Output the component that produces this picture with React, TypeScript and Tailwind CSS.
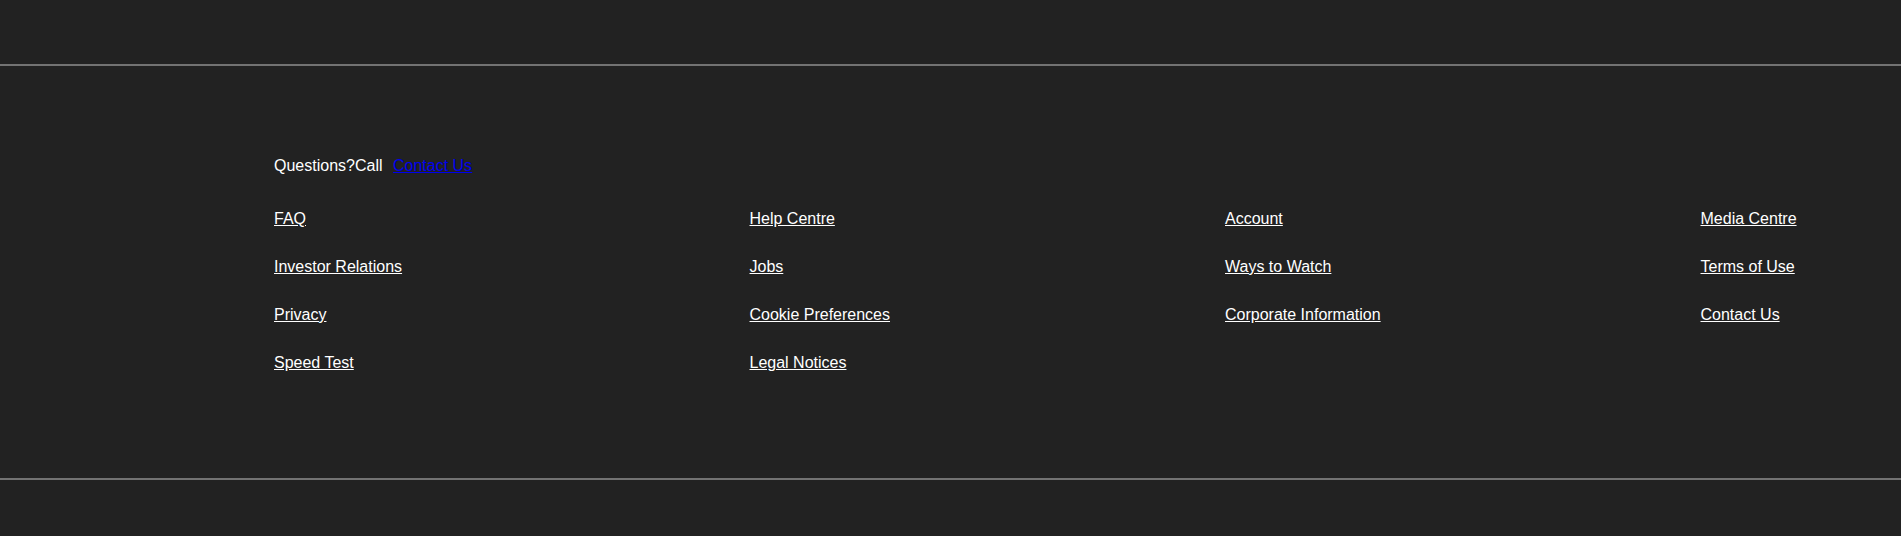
const columns = [
  ['FAQ', 'Investor Relations', 'Privacy', 'Speed Test'],
  ['Help Centre', 'Jobs', 'Cookie Preferences', 'Legal Notices'],
  ['Account', 'Ways to Watch', 'Corporate Information'],
  ['Media Centre', 'Terms of Use', 'Contact Us'],
]

const App = () => {
  return (
    <div className="min-h-screen bg-[#222222] pt-[64px] font-['Liberation_Sans',Arial,sans-serif] text-[16px] leading-[18px] text-white">
      <footer className="border-y-2 border-[#737373] pt-[91px] pb-[106px] pl-[274px]">
        <p>
          Questions?Call{' '}
          <a href="#" className="ml-[6px] text-[#0000ee] underline">
            Contact Us
          </a>
        </p>

        <div className="mt-[35px] grid grid-cols-[repeat(3,475.5px)_1fr]">
          {columns.map((col, i) => (
            <ul key={i} className="flex flex-col gap-[30px]">
              {col.map((item) => (
                <li key={item}>
                  <a href="#" className="text-white underline">
                    {item}
                  </a>
                </li>
              ))}
            </ul>
          ))}
        </div>
      </footer>
    </div>
  )
}

export default App
